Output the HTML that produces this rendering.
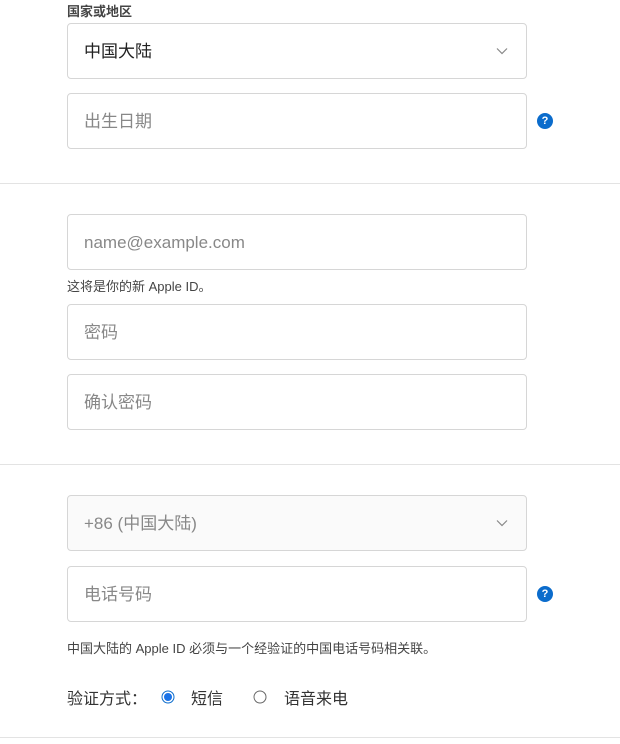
<!DOCTYPE html>
<html><head><meta charset="utf-8"><style>
body{margin:0;width:620px;height:744px;background:#fff;font-family:"Liberation Sans","Noto Sans CJK SC",sans-serif;color:#333;position:relative;overflow:hidden}
.a{position:absolute}
.in{position:absolute;left:67px;width:458px;height:54px;border:1px solid #d6d6d6;border-radius:4px;background:#fff;font-size:17px;line-height:56px;box-sizing:content-box}
.in span{position:absolute;left:16px;color:#888}
.hr{position:absolute;left:0;width:620px;height:1px;background:#e3e3e3}
.q{position:absolute;left:537px;width:16px;height:16px;border-radius:50%;background:#0b6ccc;color:#fff;font-size:11px;font-weight:bold;text-align:center;line-height:16px}
.chev{position:absolute;right:18px;top:23px}
.t{position:absolute;left:67px;font-size:13px;color:#444}
.r{position:absolute;top:686px;font-size:16px;color:#333;font-family:"Noto Sans CJK SC",sans-serif;line-height:22px}
</style></head><body>
<div class="a" style="left:67px;top:1px;font-size:13px;font-weight:bold;color:#444">国家或地区</div>
<div class="in" style="top:23px"><span style="color:#222">中国大陆</span><svg class="chev" width="12" height="8" viewBox="0 0 12 8"><path d="M1 1.5l5 5 5-5" fill="none" stroke="#888" stroke-width="1.2"/></svg></div>
<div class="in" style="top:93px"><span>出生日期</span></div>
<div class="q" style="top:113px">?</div>
<div class="hr" style="top:183px"></div>
<div class="in" style="top:214px"><span>name@example.com</span></div>
<div class="t" style="top:276px">这将是你的新 Apple ID。</div>
<div class="in" style="top:304px"><span>密码</span></div>
<div class="in" style="top:374px"><span>确认密码</span></div>
<div class="hr" style="top:464px"></div>
<div class="in" style="top:495px;background:#fafafa"><span>+86 (中国大陆)</span><svg class="chev" width="12" height="8" viewBox="0 0 12 8"><path d="M1 1.5l5 5 5-5" fill="none" stroke="#888" stroke-width="1.2"/></svg></div>
<div class="in" style="top:566px"><span>电话号码</span></div>
<div class="q" style="top:586px">?</div>
<div class="t" style="top:638px">中国大陆的 Apple ID 必须与一个经验证的中国电话号码相关联。</div>
<div class="r" style="left:67px">验证方式：</div>
<svg class="a" style="left:161px;top:690px" width="14" height="14"><circle cx="7" cy="7" r="6" fill="#fff" stroke="#0b6ccc" stroke-width="1"/><circle cx="7" cy="7" r="4" fill="#1a73e8"/></svg>
<div class="r" style="left:191px">短信</div>
<svg class="a" style="left:253px;top:690px" width="14" height="14"><circle cx="7" cy="7" r="6" fill="#fff" stroke="#666" stroke-width="1"/></svg>
<div class="r" style="left:284px">语音来电</div>
<div class="hr" style="top:737px"></div>
</body></html>
